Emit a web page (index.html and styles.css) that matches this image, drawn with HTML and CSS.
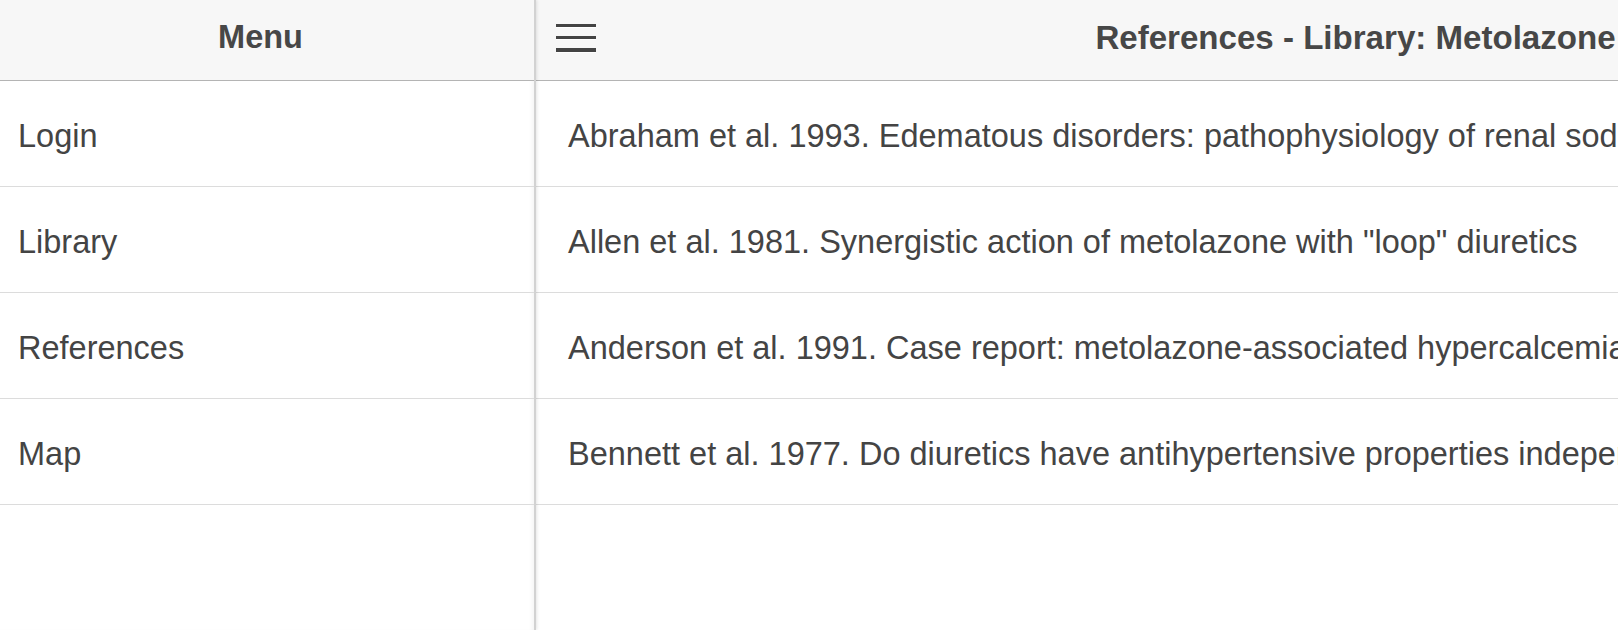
FILE: index.html
```html
<!DOCTYPE html>
<html lang="en">
<head>
<meta charset="utf-8">
<title>References - Library: Metolazone</title>
<link rel="stylesheet" href="styles.css">
</head>
<body>
<div class="app">
  <aside class="menu-pane">
    <header class="bar">
      <h1 class="bar-title menu-title">Menu</h1>
    </header>
    <ul class="list">
      <li class="row">Login</li>
      <li class="row">Library</li>
      <li class="row">References</li>
      <li class="row">Map</li>
    </ul>
  </aside>
  <main class="detail-pane">
    <div class="detail-inner">
      <header class="bar detail-bar">
        <button class="hamburger" aria-label="Menu">
          <span></span><span></span><span></span>
        </button>
        <h1 class="bar-title detail-title">References - Library: Metolazone</h1>
        <span class="bar-spacer"></span>
      </header>
      <ul class="list">
        <li class="row ref">Abraham et al. 1993. Edematous disorders: pathophysiology of renal sodium and water retention and treatment with diuretics</li>
        <li class="row ref">Allen et al. 1981. Synergistic action of metolazone with "loop" diuretics</li>
        <li class="row ref">Anderson et al. 1991. Case report: metolazone-associated hypercalcemia</li>
        <li class="row ref">Bennett et al. 1977. Do diuretics have antihypertensive properties independent of natriuresis?</li>
      </ul>
    </div>
  </main>
</div>
</body>
</html>
```

FILE: styles.css
```css
html, body {
  margin: 0;
  padding: 0;
  background: #ffffff;
  overflow: hidden;
}

body {
  font-family: "Liberation Sans", Arial, Helvetica, sans-serif;
  color: #444444;
}

.app {
  display: flex;
  height: 630px;
  width: 1618px;
  overflow: hidden;
}

.menu-pane {
  flex: 0 0 534px;
  width: 534px;
  border-right: 2px solid #d2d2d2;
  box-shadow: 1px 0 3px rgba(0, 0, 0, 0.10), inset -4px 0 5px -3px rgba(0, 0, 0, 0.06);
  position: relative;
  z-index: 1;
  background: #ffffff;
}

.detail-pane {
  flex: 1 1 auto;
  overflow: hidden;
  min-width: 0;
}

.detail-inner {
  width: 1619px;
}

.bar {
  height: 81px;
  box-sizing: border-box;
  background: #f7f7f7;
  border-bottom: 1px solid #b4b4b4;
  display: flex;
  align-items: center;
  justify-content: center;
  padding-bottom: 5px;
}

.bar-title {
  margin: 0;
  font-size: 32.5px;
  font-weight: bold;
  color: #474747;
  white-space: nowrap;
}

.detail-title {
  font-size: 33.1px;
}

.menu-title {
  margin-right: 13px;
}

.detail-bar {
  display: grid;
  grid-template-columns: 1fr auto 1fr;
  justify-content: stretch;
  padding-left: 20px;
}

.hamburger {
  justify-self: start;
  width: 40px;
  height: 28px;
  padding: 0;
  margin: 0;
  border: 0;
  background: transparent;
  display: flex;
  flex-direction: column;
  justify-content: space-between;
}

.hamburger span {
  display: block;
  width: 40px;
  height: 3.5px;
  background: #444444;
  box-shadow: 0 1px 0 rgba(255, 255, 255, 0.9);
}

.list {
  list-style: none;
  margin: 0;
  padding: 0;
}

.row {
  height: 106px;
  box-sizing: border-box;
  border-bottom: 1px solid #dcdcdc;
  display: flex;
  align-items: center;
  padding: 6px 0 0 18px;
  font-size: 32.5px;
  white-space: nowrap;
  overflow: hidden;
}

.row.ref {
  padding-left: 32px;
}
```
